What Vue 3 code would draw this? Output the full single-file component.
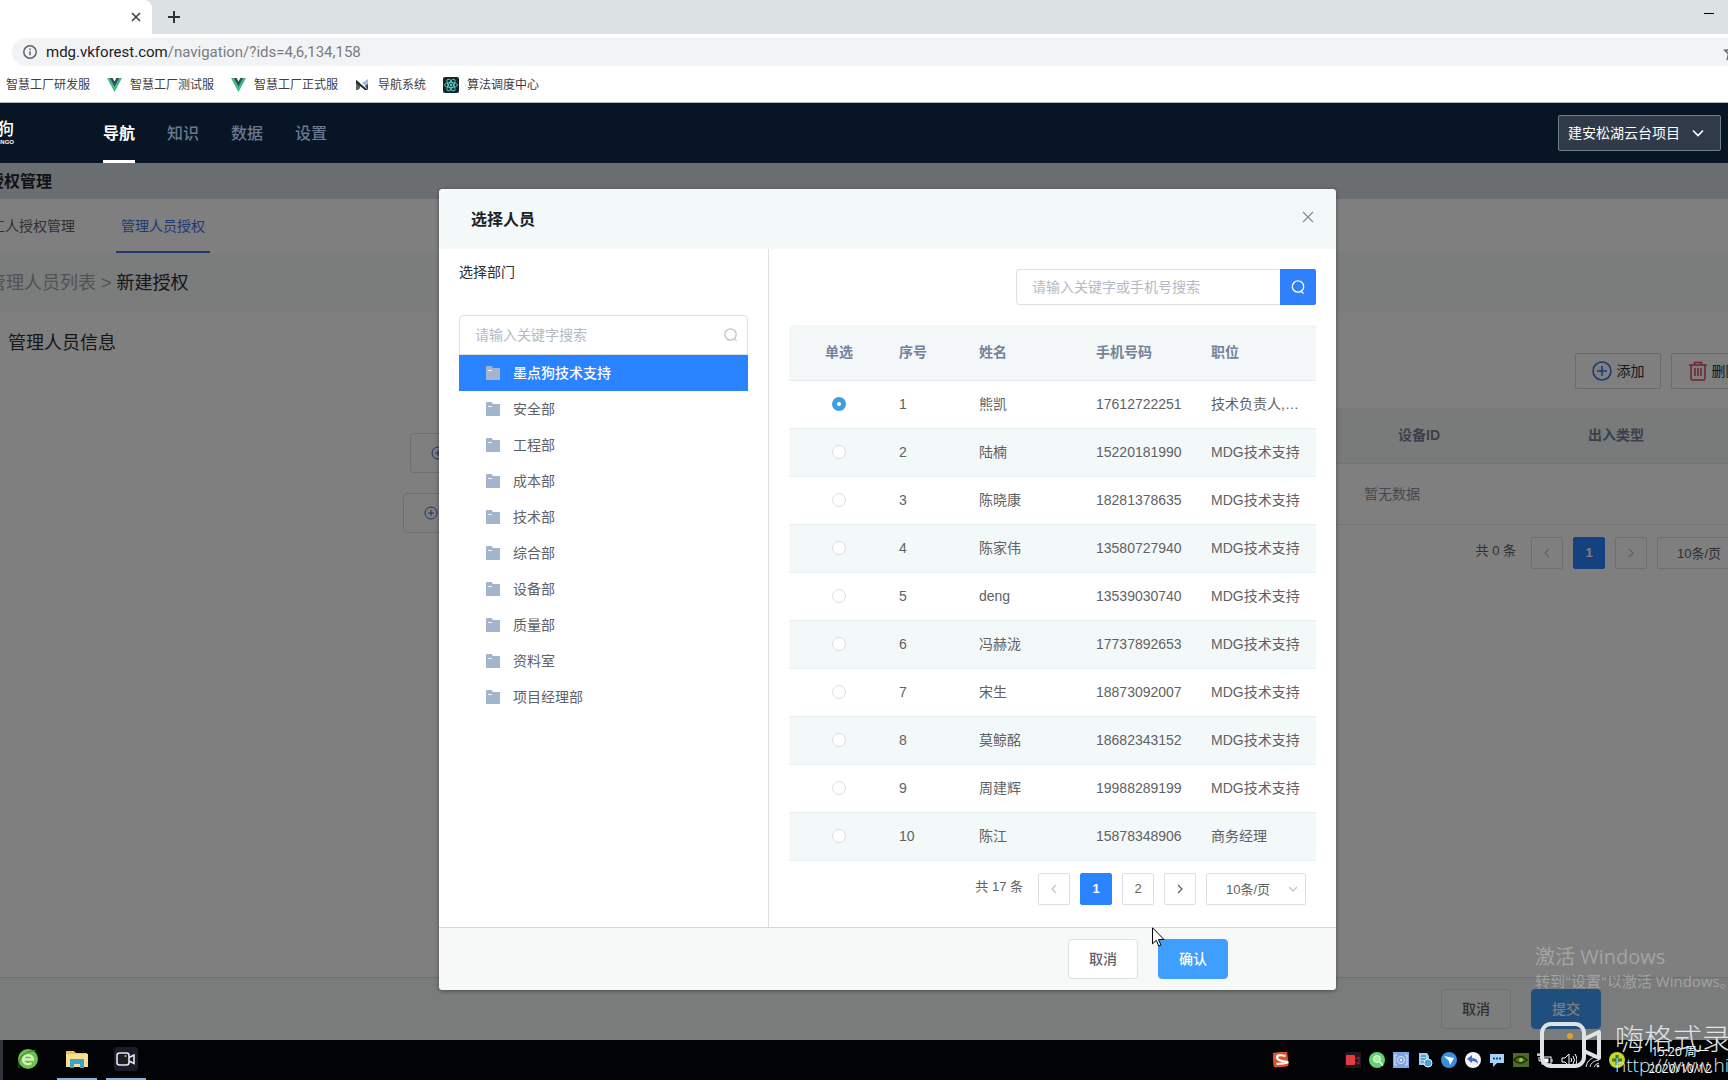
<script setup>
import { ref } from 'vue'

const bookmarks = [
  { name: '智慧工厂研发服', icon: '' },
  { name: '智慧工厂测试服', icon: 'vue' },
  { name: '智慧工厂正式服', icon: 'vue' },
  { name: '导航系统', icon: 'nav' },
  { name: '算法调度中心', icon: 'atom' },
]
const menus = ['导航', '知识', '数据', '设置']
const departments = ['墨点狗技术支持', '安全部', '工程部', '成本部', '技术部', '综合部', '设备部', '质量部', '资料室', '项目经理部']
const activeDepartment = ref(0)
const people = [
  { id: 1, name: '熊凯', phone: '17612722251', job: '技术负责人,…' },
  { id: 2, name: '陆楠', phone: '15220181990', job: 'MDG技术支持' },
  { id: 3, name: '陈晓康', phone: '18281378635', job: 'MDG技术支持' },
  { id: 4, name: '陈家伟', phone: '13580727940', job: 'MDG技术支持' },
  { id: 5, name: 'deng', phone: '13539030740', job: 'MDG技术支持' },
  { id: 6, name: '冯赫泷', phone: '17737892653', job: 'MDG技术支持' },
  { id: 7, name: '宋生', phone: '18873092007', job: 'MDG技术支持' },
  { id: 8, name: '莫鲸酩', phone: '18682343152', job: 'MDG技术支持' },
  { id: 9, name: '周建辉', phone: '19988289199', job: 'MDG技术支持' },
  { id: 10, name: '陈江', phone: '15878348906', job: '商务经理' },
]
const selected = ref(1)
</script>

<template>
  <div class="screen">
    <header class="browser">
      <div class="tabstrip">
        <div class="tab">
          <button class="plain" aria-label="关闭标签页">
            <svg width="10" height="10" viewBox="0 0 10 10"><path d="M1 1l8 8M9 1L1 9" stroke="#3c4043" stroke-width="1.6" /></svg>
          </button>
        </div>
        <button class="plain newtab" aria-label="新标签页">
          <svg width="12" height="12" viewBox="0 0 12 12"><path d="M6 0v12M0 6h12" stroke="#2e3236" stroke-width="2" /></svg>
        </button>
        <button class="plain minimize" aria-label="最小化">
          <svg width="10" height="2" viewBox="0 0 10 2"><path d="M0 .5h10" stroke="#000" stroke-width="1" /></svg>
        </button>
      </div>
      <div class="addressbar">
        <div class="address">
          <svg width="14" height="14" viewBox="0 0 14 14" fill="none" stroke="#5f6368" stroke-width="1.5"><circle cx="7" cy="7" r="6.2" /><path d="M7 6.2v4M7 3.4v1.5" /></svg>
          <span class="url">mdg.vkforest.com<span>/navigation/?ids=4,6,134,158</span></span>
          <svg class="star" width="18" height="18" viewBox="0 0 18 18" fill="none" stroke="#5f6368" stroke-width="1.6"><path d="M9 2l2.1 4.8 5.2.5-3.9 3.5 1.1 5.1L9 13.200l-4.500 2.700 1.100-5.100L1.700 7.300l5.200-.5z" /></svg>
        </div>
      </div>
      <nav class="bookmarks">
        <a v-for="b in bookmarks" :key="b.name" href="#">
          <svg v-if="b.icon === 'vue'" width="15" height="14" viewBox="0 0 15 14"><path d="M0 0h15L7.500 14z" fill="#42b883" /><path d="M3 0h9L7.500 8.500z" fill="#35495e" /><path d="M5.600 0h3.800L7.500 3.500z" fill="#fff" /></svg>
          <svg v-else-if="b.icon === 'nav'" width="15" height="14" viewBox="0 0 15 14"><path d="M1 2l4 3v5l-2 2H1z" fill="#5a626c" /><path d="M1 2l12 10h-3L1 5z" fill="#23282f" /><path d="M7 5L13 1v6l-2 1z" fill="#9dbde4" /><path d="M10 8l3-2v6z" fill="#3c4450" /></svg>
          <svg v-else-if="b.icon === 'atom'" width="16" height="16" viewBox="0 0 16 16"><rect width="16" height="16" rx="2" fill="#15262b" /><g fill="none" stroke="#5fc4c4" stroke-width="1"><ellipse cx="8" cy="8" rx="6.500" ry="2.500" /><ellipse cx="8" cy="8" rx="6.500" ry="2.500" transform="rotate(60 8 8)" /><ellipse cx="8" cy="8" rx="6.500" ry="2.500" transform="rotate(120 8 8)" /></g><circle cx="8" cy="8" r="1.300" fill="#5fc4c4" /></svg>
          <span>{{ b.name }}</span>
        </a>
      </nav>
    </header>

    <div class="topbar">
      <div class="logo"><b>狗</b><small>DIANGO</small></div>
      <nav class="menus">
        <a v-for="(m, i) in menus" :key="m" href="#" :class="{ active: i === 0 }">{{ m }}</a>
      </nav>
      <div class="project">
        <select aria-label="项目"><option>建安松湖云台项目</option></select>
        <svg width="12" height="8" viewBox="0 0 12 8" fill="none" stroke="#fff" stroke-width="1.600"><path d="M1 1.500l5 5 5-5" /></svg>
      </div>
    </div>

    <div class="stage">
      <div class="page">
        <h1>授权管理</h1>
        <nav class="subtabs">
          <a href="#">工人授权管理</a>
          <a href="#" class="on">管理人员授权</a>
        </nav>
        <div class="crumbs"><a href="#">管理人员列表</a><span>&gt;</span><b>新建授权</b></div>
        <div class="content">
          <section class="info">
            <h2>管理人员信息</h2>
            <div class="pickers">
              <button v-for="t in ['选择人员', '选择部门组']" :key="t">
                <svg width="14" height="14" viewBox="0 0 14 14" fill="none" stroke="#3c5fd0"><circle cx="7" cy="7" r="6" /><path d="M7 4v6M4 7h6" /></svg>{{ t }}
              </button>
            </div>
          </section>
          <section class="devices">
            <div class="tools">
              <button>
                <svg width="20" height="20" viewBox="0 0 20 20" fill="none" stroke="#2f6fe8" stroke-width="1.500"><circle cx="10" cy="10" r="9" /><path d="M10 5v10M5 10h10" /></svg>添加
              </button>
              <button>
                <svg width="18" height="20" viewBox="0 0 18 20" fill="none" stroke="#e0455a" stroke-width="1.500"><path d="M0 4h18M5.500 4V1.500h7V4M2 4v13.500a1.500 1.500 0 0 0 1.500 1.500h11a1.500 1.500 0 0 0 1.500-1.500V4M6 7v8M9 7v8M12 7v8" /></svg>删除
              </button>
            </div>
            <table>
              <thead><tr><th></th><th></th><th>设备ID</th><th>出入类型</th></tr></thead>
              <tbody><tr><td colspan="4">暂无数据</td></tr></tbody>
            </table>
            <div class="pager">
              <span>共 0 条</span>
              <button disabled aria-label="上一页"><svg width="8" height="10" viewBox="0 0 8 10"><path d="M6 1L2 5l4 4" /></svg></button>
              <button class="current">1</button>
              <button disabled aria-label="下一页"><svg width="8" height="10" viewBox="0 0 8 10"><path d="M2 1l4 4-4 4" /></svg></button>
              <div class="size"><select aria-label="每页条数"><option>10条/页</option></select></div>
            </div>
          </section>
        </div>
        <div class="actions">
          <button class="btn">取消</button>
          <button class="btn primary">提交</button>
        </div>
      </div>

      <div class="overlay">
        <div class="dialog" role="dialog" aria-labelledby="dialog-title">
          <div class="dialog-head">
            <h2 id="dialog-title">选择人员</h2>
            <button class="plain" aria-label="关闭"><svg width="12" height="12" viewBox="0 0 12 12"><path d="M1 1l10 10M11 1L1 11" stroke="#868b92" stroke-width="1.200" /></svg></button>
          </div>
          <div class="dialog-body">
            <aside>
              <label for="dept-search">选择部门</label>
              <div class="dept-search">
                <input id="dept-search" type="text" placeholder="请输入关键字搜索" />
                <svg width="14" height="14" viewBox="0 0 14 14" fill="none" stroke="#bcc1ca" stroke-width="1.200"><circle cx="6.500" cy="6.500" r="5.700" /><path d="M10.500 10.500l2 2.500" /></svg>
              </div>
              <ul>
                <li v-for="(d, i) in departments" :key="d">
                  <button :class="{ on: i === activeDepartment }" @click="activeDepartment = i">
                    <svg width="14" height="14" viewBox="0 0 14 14"><path d="M0 1a1 1 0 0 1 1-1h4.500L7 2h7v12H0z" fill="#a3b5cd" /><path d="M2 4.500h4" stroke="#eef3f9" /></svg>{{ d }}
                  </button>
                </li>
              </ul>
            </aside>
            <section class="people">
              <form class="search" @submit.prevent>
                <input type="text" aria-label="搜索人员" placeholder="请输入关键字或手机号搜索" />
                <button aria-label="搜索"><svg width="14" height="14" viewBox="0 0 14 14" fill="none" stroke="#fff" stroke-width="1.300"><circle cx="7" cy="6.500" r="5.700" /><path d="M10 11l2.500 2.500" /></svg></button>
              </form>
              <table>
                <thead><tr><th class="pick">单选</th><th>序号</th><th>姓名</th><th>手机号码</th><th>职位</th></tr></thead>
                <tbody>
                  <tr v-for="p in people" :key="p.id">
                    <td class="pick"><input v-model="selected" type="radio" name="person" :value="p.id" :aria-label="p.name" /></td>
                    <td>{{ p.id }}</td>
                    <td>{{ p.name }}</td>
                    <td>{{ p.phone }}</td>
                    <td>{{ p.job }}</td>
                  </tr>
                </tbody>
              </table>
              <div class="pager">
                <span>共 17 条</span>
                <button disabled aria-label="上一页"><svg width="8" height="10" viewBox="0 0 8 10"><path d="M6 1L2 5l4 4" /></svg></button>
                <button class="current">1</button>
                <button>2</button>
                <button aria-label="下一页"><svg width="8" height="10" viewBox="0 0 8 10"><path d="M2 1l4 4-4 4" /></svg></button>
                <div class="size">
                  <select aria-label="每页条数"><option>10条/页</option></select>
                  <svg width="8" height="6" viewBox="0 0 8 6"><path d="M0 1l4 4 4-4" fill="none" stroke="#c0c4cc" /></svg>
                </div>
              </div>
            </section>
          </div>
          <div class="dialog-foot">
            <button class="btn">取消</button>
            <button class="btn primary">确认</button>
            <svg class="cursor" width="13" height="20" viewBox="0 0 13 20"><path d="M.5.800v16l3.800-3.500 2.500 5.800 2.200-1-2.500-5.600H12z" fill="#fff" stroke="#000" /></svg>
          </div>
        </div>
      </div>

      <div class="activate"><p>激活 Windows</p><p>转到"设置"以激活 Windows。</p></div>
    </div>

    <footer class="taskbar">
      <div class="apps">
        <span class="app">
          <svg width="22" height="22" viewBox="0 0 22 22"><circle cx="11" cy="11" r="10" fill="#6cc04f" /><path d="M2 20Q-1 5 19 2" fill="none" stroke="#2b7c2b" stroke-width="1" /><path d="M6 11.500h10a5 4.500 0 1 0-1.600 3.500" fill="none" stroke="#d2f2b8" stroke-width="2.400" /></svg>
        </span>
        <span class="app open">
          <svg width="22" height="20" viewBox="0 0 22 20"><path d="M0 2h8l2 2h11v14H0z" fill="#eebf55" /><path d="M0 5h22v13H0z" fill="#fbe08c" /><path d="M4 10h14v9h-4v-4H8v4H4z" fill="#3aa5cf" /></svg>
        </span>
        <span class="app open">
          <svg width="24" height="24" viewBox="0 0 24 24"><rect width="24" height="24" rx="4" fill="#1a1d29" /><g fill="none" stroke="#e3e7ee" stroke-width="1.600"><rect x="3" y="6" width="12" height="12" rx="2.500" /><path d="M15 10.500l5-2.500v8.500l-5-2.500" /></g><circle cx="11.500" cy="9" r="1" fill="#e2b13c" /></svg>
        </span>
      </div>
      <svg class="ime" width="16" height="16" viewBox="0 0 16 16"><rect width="15" height="15" rx="2" fill="#e2502a" transform="rotate(-6 8 8)" /><path d="M12.500 4Q4 2 4 5.200T12 9.500 3.500 12" fill="none" stroke="#fff" stroke-width="2.200" /></svg>
      <div class="tray">
        <svg viewBox="0 0 16 16"><rect width="16" height="16" rx="2" fill="#24171b" /><rect x="1" y="3" width="9" height="10" rx="1" fill="#e23b43" /><path d="M10 7l4-2v7l-4-2" fill="none" stroke="#8d3038" /></svg>
        <svg viewBox="0 0 16 16"><circle cx="8" cy="8" r="8" fill="#66d171" /><circle cx="8" cy="7" r="3.500" fill="#a8edac" stroke="#e2ffe2" /><path d="M10.500 9.500l3.500 4" stroke="#e2ffe2" stroke-width="1.500" /></svg>
        <svg viewBox="0 0 16 16"><rect width="16" height="16" fill="#7fa5e8" /><path d="M4 3H2v10h2M12 3h2v10h-2" fill="none" stroke="#dce8fb" /><circle cx="8" cy="8" r="3.500" fill="none" stroke="#dce8fb" /><circle cx="8" cy="8" r="1" fill="#fff" /></svg>
        <svg viewBox="0 0 16 16"><path d="M2 1h8l2 3v9H2z" fill="#9fd0ef" /><path d="M4 4h5M4 7h5M4 10h3" stroke="#2b6ea4" /><circle cx="11" cy="11" r="4" fill="#4d9ed8" stroke="#d9f0ff" /></svg>
        <svg viewBox="0 0 16 16"><circle cx="8" cy="8" r="8" fill="#3a8ee0" /><path d="M3 4l10 2-4 7-1-4z" fill="#fff" /></svg>
        <svg viewBox="0 0 16 16"><circle cx="8" cy="8" r="8" fill="#f2f5fc" /><path d="M2 7l5-4v3q6 0 6 6-2-3-6-3v2z" fill="#3f6fc9" /></svg>
        <svg viewBox="0 0 16 16"><path d="M1 2h14v9H8l-4 4v-4H1z" fill="#a6d2f8" /><path d="M4 6.500h2M7 6.500h2M10 6.500h2" stroke="#1f4c86" stroke-width="2" /></svg>
        <svg viewBox="0 0 16 16"><rect y="1" width="16" height="14" fill="#4c6b1e" /><path d="M1 8q6-7 13 0-7 6-13 0z" fill="none" stroke="#1d2c0c" stroke-width="1.400" /><circle cx="8" cy="8" r="2" fill="#92c83e" /></svg>
        <svg viewBox="0 0 16 16" fill="none" stroke="#fff"><rect x="5" y="5" width="9" height="7" /><path d="M15 7v3M0 3h4M1 1v3M3 1v3M2 5v4h3" /><rect x="7" y="7" width="4" height="3" fill="#fff" /></svg>
        <svg viewBox="0 0 16 16" fill="none" stroke="#fff"><path d="M1 6h3l4-4v12l-4-4H1zM10 6q1.500 2 0 4M12 4q3 4 0 8M14 2q4 6 0 12" /></svg>
        <svg viewBox="0 0 16 16" fill="none" stroke="#ddd"><path d="M1 15q1-9 13-11M5 15q1-6 9-7M9 15q1-3 5-4" /><circle cx="13" cy="14" r="1" fill="#fff" /></svg>
        <svg viewBox="0 0 16 16"><circle cx="8" cy="8" r="8" fill="#c9d62b" /><path d="M8 3v10M3 8h10" stroke="#3e7a1c" stroke-width="3" /></svg>
      </div>
      <div class="clock"><span>15:20 周一</span><span>2020/10/12</span></div>
    </footer>

    <div class="recorder">
      <svg width="64" height="48" viewBox="0 0 64 48" fill="none" stroke="#dfe3e6" stroke-width="4"><rect x="3" y="2" width="42" height="42" rx="9" /><path d="M45 17l15-7v26l-15-7" stroke-linejoin="round" /><circle cx="31" cy="14" r="3" fill="#d9a62b" stroke="none" /></svg>
      <div class="recorder-text"><p>嗨格式录</p><p>http://www.hi</p></div>
    </div>
  </div>
</template>

<style>
body { margin: 0; }
</style>

<style scoped>
* { box-sizing: border-box; }
.screen {
  position: relative;
  display: flex;
  flex-direction: column;
  min-height: 100vh;
  overflow: hidden;
  background: #fff;
  color: #606266;
  font: 14px/20px "Liberation Sans", "Noto Sans CJK SC", sans-serif;
}
h1, h2, p, ul { margin: 0; padding: 0; list-style: none; }
a { color: inherit; text-decoration: none; }
button, input, select { font: inherit; color: inherit; }
button { display: flex; align-items: center; justify-content: center; padding: 0; cursor: pointer; }
input, select { outline: none; }
svg { flex: none; display: block; }
.plain { border: 0; background: none; }

/* browser chrome */
.browser { border-bottom: 1px solid #b9bcbe; font-family: "Open Sans", "Noto Sans CJK SC", sans-serif; }
.tabstrip { display: flex; align-items: center; height: 34px; background: #dce1e3; }
.tab { display: flex; align-items: center; justify-content: flex-end; width: 152px; height: 34px; padding-right: 11px; border-radius: 0 8px 0 0; background: #fff; }
.newtab { margin-left: 16px; }
.minimize { margin: 0 14px 0 auto; height: 28px; align-self: flex-start; }
.addressbar { padding: 4px 0 4px 12px; }
.address { display: flex; align-items: center; gap: 9px; height: 28px; padding-left: 11px; border-radius: 14px 0 0 14px; background: #f1f3f4; overflow: hidden; }
.url { color: #202124; font-family: Roboto, sans-serif; font-size: 15px; }
.url span { color: #777c81; }
.star { margin-left: auto; margin-right: -13px; }
.bookmarks { display: flex; align-items: center; gap: 17px; height: 32px; padding: 0 0 2px 6px; color: #3c4043; font-size: 12px; }
.bookmarks a { display: flex; align-items: center; gap: 8px; }

/* app bar */
.topbar { display: flex; align-items: center; height: 60px; padding-right: 7px; background: #071524; }
.logo { display: flex; flex-direction: column; align-items: flex-end; width: 14px; margin-right: 89px; color: #fff; white-space: nowrap; }
.logo b { font-size: 17px; line-height: 18px; font-weight: 500; }
.logo small { font-size: 6px; line-height: 6px; font-weight: 700; }
.menus { display: flex; gap: 32px; align-self: stretch; color: #6b7891; font-size: 16px; font-weight: 500; line-height: 62px; }
.menus a { height: 60px; }
.menus .active { color: #fff; font-weight: 700; box-shadow: inset 0 -3px #fff; }
.project { display: flex; align-items: center; width: 163px; height: 36px; margin-left: auto; padding-right: 16px; border: 1px solid #737d8a; border-radius: 2px; background: #303a48; color: #fff; }
.project select { flex: 1; height: 34px; padding: 0 0 0 9px; border: 0; background: none; appearance: none; }

/* page */
.stage { position: relative; display: flex; flex: 1; overflow: hidden; }
.page { display: flex; flex: 1; flex-direction: column; min-width: 0; margin: 0 -48px 0 -12px; }
h1 { height: 36px; background: #d6dde1; color: #1f2733; font-size: 16px; line-height: 38px; }
.subtabs { display: flex; gap: 41px; height: 54px; padding-left: 3px; line-height: 54px; }
.subtabs a { height: 54px; }
.subtabs .on { padding: 0 5px; color: #4270e8; border-bottom: 2px solid #4270e8; }
.crumbs { display: flex; gap: 5px; height: 60px; background: #f7f8f8; color: #a0a5ad; font-size: 18px; line-height: 60px; }
.crumbs b { color: #2b2f36; font-weight: 400; }
.content { display: flex; flex: 1; justify-content: space-between; }
.info { width: 960px; padding: 15px 0 0 20px; }
.info h2 { color: #2b2f36; font-size: 18px; font-weight: 400; line-height: 30px; }
.pickers { display: flex; flex-direction: column; align-items: center; gap: 20px; width: 922px; padding-top: 75px; }
.pickers button { gap: 6px; height: 40px; padding: 0 20px; border: 1px solid #dcdfe6; border-radius: 4px; background: #fff; }
.devices { flex: none; width: 768px; padding-top: 40px; }
.tools { display: flex; justify-content: flex-end; gap: 10px; padding-right: 19px; margin-bottom: 19px; }
.tools button { gap: 5px; width: 86px; height: 36px; border: 1px solid #d3d7de; border-radius: 2px; background: #fff; color: #2b2f36; }
table { width: 100%; border-spacing: 0; table-layout: fixed; text-align: left; }
th { height: 56px; padding: 0 10px 1px; border-bottom: 1px solid #e6ebeb; background: #f3f7f7; color: #74829a; font-weight: 700; }
td { height: 48px; padding: 0 10px 2px; border-bottom: 1px solid #ebeef0; white-space: nowrap; }
.devices th { width: 190px; }
.devices th:last-child { width: 198px; }
.devices td { height: 61px; padding-bottom: 0; text-align: center; color: #909399; }
.pager { display: flex; align-items: center; justify-content: flex-end; gap: 10px; padding-top: 12px; font-size: 13px; }
.devices .pager { padding-right: 19px; }
.pager > span { margin: 0 5px 4px 0; }
.pager button, .size { width: 32px; height: 32px; border: 1px solid #dcdfe6; border-radius: 2px; background: #fff; }
.pager path { fill: none; stroke: currentColor; stroke-width: 1.3; }
.pager button:disabled { color: #c0c4cc; }
.pager .current { border-color: #2a83ff; background: #2a83ff; color: #fff; font-weight: 700; }
.pager .size { display: flex; align-items: center; width: 100px; padding-right: 8px; }
.pager .size path { stroke: #c0c4cc; }
.size select { flex: 1; min-width: 0; height: 30px; padding: 1px 0 0 19px; border: 0; background: none; appearance: none; }
.actions { display: flex; justify-content: flex-end; gap: 20px; padding: 11px 175px 11px 0; border-top: 1px solid #dcdfe0; background: #f4f7f7; }
.btn { width: 70px; height: 40px; border: 1px solid #dcdfe6; border-radius: 4px; background: #fff; color: #606266; font-weight: 500; }
.actions .btn:first-child { background: #f8fafa; }
.btn.primary { border-color: #409eff; background: #409eff; color: #fff; }

/* dialog */
.overlay { position: absolute; inset: 0; padding: 26px 0 0 47px; background: rgba(0, 0, 0, 0.5); }
.dialog { width: 897px; max-width: 100%; margin: 0 auto; border-radius: 4px; overflow: hidden; background: #fff; box-shadow: 0 1px 4px rgba(0, 0, 0, 0.4); }
.dialog-head { display: flex; align-items: center; justify-content: space-between; height: 60px; padding: 0 22px 0 32px; background: #f3f8f9; }
.dialog-head h2 { color: #1c222b; font-size: 16px; font-weight: 700; line-height: 20px; padding-top: 2px; }
.dialog-head .plain { padding-bottom: 4px; }
.dialog-body { display: flex; }
aside { flex: none; width: 330px; padding: 13px 20px 0; border-right: 1px solid #dcdfe2; }
aside label { display: block; margin-bottom: 33px; color: #2b2f36; }
.dept-search { display: flex; align-items: center; height: 40px; padding-right: 9px; border: 1px solid #dcdfe6; border-radius: 4px 4px 0 0; }
.dept-search input { flex: 1; min-width: 0; height: 38px; padding: 0 15px; border: 0; background: none; }
input::placeholder { color: #b4bac5; opacity: 1; }
li button { justify-content: flex-start; gap: 13px; width: 100%; height: 36px; padding-left: 27px; border: 0; background: none; }
li .on { background: #2a83ff; color: #fff; font-weight: 500; }
.people { flex: 1; min-width: 0; padding: 20px 20px 22px; }
.search { display: flex; justify-content: flex-end; height: 36px; margin-bottom: 20px; }
.search input { width: 264px; padding: 0 15px; border: 1px solid #dcdfe6; border-right: 0; border-radius: 4px 0 0 4px; }
.search button { width: 36px; border: 0; border-radius: 0 2px 2px 0; background: #2f80fa; }
.people .pick { width: 100px; text-align: center; }
.people th:nth-child(2) { width: 80px; }
.people th:nth-child(3) { width: 117px; }
.people tr:nth-child(even) td { background: #f3f8f8; }
.pick input { display: block; width: 14px; height: 14px; margin: 0 auto; border: 1px solid #dcdfe6; border-radius: 50%; background: #fff; appearance: none; }
.pick input:checked { border: 5px solid #409ee0; }
.people .pager { padding-right: 10px; }
.dialog-foot { position: relative; display: flex; justify-content: flex-end; gap: 20px; padding: 11px 108px 11px 0; border-top: 1px solid #d5d9dc; background: #f7f9f9; }
.cursor { position: absolute; top: -1px; right: 171px; }

/* desktop */
.activate { position: absolute; right: 0; bottom: 48px; width: 193px; color: rgba(190, 190, 190, 0.6); font-family: "Open Sans", "Noto Sans CJK SC", sans-serif; white-space: nowrap; }
.activate p { font-size: 20px; line-height: 26px; }
.activate p + p { font-size: 15px; line-height: 22px; }
.taskbar { display: flex; align-items: center; height: 40px; padding-right: 15px; border-left: 3px solid #30343a; background: #020305; color: #fff; }
.apps { display: flex; gap: 9px; padding-left: 5px; }
.app { display: flex; align-items: center; justify-content: center; width: 40px; height: 40px; border-bottom: 2px solid transparent; }
.app.open { border-color: #8fb0dc; }
.ime { margin-left: auto; }
.tray { display: flex; gap: 8px; margin: 0 22px 0 56px; }
.tray svg { width: 16px; height: 16px; }
.clock { display: flex; flex-direction: column; align-items: center; width: 66px; font: 12px/17px "Open Sans", "Noto Sans CJK SC", sans-serif; white-space: nowrap; }
.recorder { position: absolute; right: 0; bottom: 0; display: flex; gap: 12px; width: 189px; height: 58px; overflow: hidden; color: #dfe3e6; font-family: "Open Sans", "Noto Sans CJK SC", sans-serif; font-weight: 300; white-space: nowrap; }
.recorder p { font-size: 29px; line-height: 34px; }
.recorder p + p { font-size: 19px; line-height: 18px; }
</style>
